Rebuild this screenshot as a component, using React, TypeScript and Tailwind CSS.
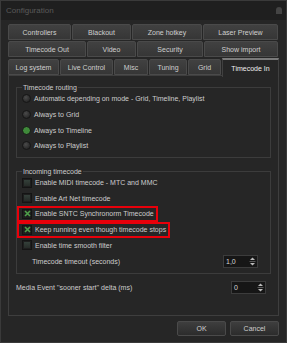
import React from "react";

type Tab = { label: string; w: string; active?: boolean };

const rows: Tab[][] = [
  [
    { label: "Controllers", w: "w-[63px]" },
    { label: "Blackout", w: "w-[59px]" },
    { label: "Zone hotkey", w: "w-[70px]" },
    { label: "Laser Preview", w: "w-[75px]" },
  ],
  [
    { label: "Timecode Out", w: "w-[78px]" },
    { label: "Video", w: "w-[49px]" },
    { label: "Security", w: "w-[66px]" },
    { label: "Show import", w: "w-[74px]" },
  ],
  [
    { label: "Log system", w: "w-[51px]" },
    { label: "Live Control", w: "w-[53px]" },
    { label: "Misc", w: "w-[34px]" },
    { label: "Tuning", w: "w-[38px]" },
    { label: "Grid", w: "w-[33px]" },
    { label: "Timecode In", w: "w-[57px]", active: true },
  ],
];

const routing = [
  { label: "Automatic depending on mode - Grid, Timeline, Playlist" },
  { label: "Always to Grid" },
  { label: "Always to Timeline", checked: true },
  { label: "Always to Playlist" },
];

const incoming = [
  { label: "Enable MIDI timecode - MTC and MMC" },
  { label: "Enable Art Net timecode" },
  { label: "Enable SNTC Synchronorm Timecode", checked: true, mark: true },
  { label: "Keep running even though timecode stops", checked: true, mark: true },
  { label: "Enable time smooth filter" },
];

function Radio({ checked }: { checked?: boolean }) {
  return (
    <span
      className={`mr-[3px] flex h-[9px] w-[9px] shrink-0 items-center justify-center rounded-full border border-[#161616] ${
        checked ? "bg-[#3f8a3a]" : "bg-[radial-gradient(circle_at_40%_35%,#4a4a4a,#1c1c1c)]"
      }`}
    />
  );
}

function Check({ checked }: { checked?: boolean }) {
  return (
    <span className="mr-[3px] flex h-[10px] w-[10px] shrink-0 items-center justify-center border border-[#141414] bg-[#1e1e1e]">
      {checked ? (
        <svg width="7" height="7" viewBox="0 0 7 7">
          <path d="M1 1L6 6M6 1L1 6" stroke="#4fa04a" strokeWidth="1.6" />
        </svg>
      ) : (
        <span className="h-[6px] w-[6px] bg-[linear-gradient(#34403a,#262b28)]" />
      )}
    </span>
  );
}

function Spin({ value, w }: { value: string; w: string }) {
  return (
    <div className={`flex h-[13px] ${w} items-center justify-between border border-[#3c3c3c] bg-[#161616] pl-[2px] pr-[1px]`}>
      <span className="text-[#d6d6d6]">{value}</span>
      <svg width="7" height="9" viewBox="0 0 7 9">
        <path d="M3.5 0.5L6 3H1Z" fill="#bbb" />
        <path d="M0.5 4.5H6.5" stroke="#777" strokeWidth="0.7" />
        <path d="M3.5 8.5L6 6H1Z" fill="#bbb" />
      </svg>
    </div>
  );
}

export default function App() {
  return (
    <div className="h-[343px] w-[287px] overflow-hidden border border-[#3a3a3a] bg-[#262626] text-[7px] leading-none text-[#cdcdcd] [font-family:'Liberation_Sans',Arial,sans-serif]">
      <div className="flex h-[19px] items-center justify-between bg-[#1f1f1f] pl-[5px] pr-[4px]">
        <span className="text-[8px] text-[#5a5a5a]">Configuration</span>
        <span className="h-[7px] w-[6px] rounded-t-full bg-[#444]" />
      </div>

      <div className="px-[7px] pt-[4px]">
        <div className="flex flex-col gap-[1px]">
          {rows.map((row, i) => (
            <div key={i} className="flex items-end gap-[1px]">
              {row.map((t) =>
                t.active ? (
                  <div
                    key={t.label}
                    className={`${t.w} relative z-10 -mb-[2px] flex h-[19px] items-center justify-center border-x border-[#404040] border-t-2 border-t-[#7a7a7a] bg-[#262626] text-[#eeeeee]`}
                  >
                    {t.label}
                  </div>
                ) : (
                  <div
                    key={t.label}
                    className={`${t.w} flex h-[16px] items-center justify-center rounded-t-[2px] border border-[#4a4a4a] bg-[linear-gradient(#414141,#363636)] text-[#cfcfcf]`}
                  >
                    {t.label}
                  </div>
                )
              )}
            </div>
          ))}
        </div>

        <div className="h-[241px] border border-[#3e3e3e] bg-[#262626] px-[7px] pt-[8px]">
          <fieldset className="border border-[#3c3c3c] px-[5px] pb-[3px]">
            <legend className="px-[1px]">Timecode routing</legend>
            {routing.map((r) => (
              <div key={r.label} className="flex h-[15.7px] items-center">
                <Radio checked={r.checked} />
                <span>{r.label}</span>
              </div>
            ))}
          </fieldset>

          <fieldset className="mt-[10px] border border-[#3c3c3c] px-[5px] pb-[3px]">
            <legend className="px-[1px]">Incoming timecode</legend>
            {incoming.map((r) =>
              r.mark ? (
                <div
                  key={r.label}
                  className="-ml-[5px] flex h-[15.7px] w-fit items-center border-2 border-[#e8000a] pl-[3px] pr-[2px]"
                >
                  <Check checked={r.checked} />
                  <span>{r.label}</span>
                </div>
              ) : (
                <div key={r.label} className="flex h-[15.7px] items-center">
                  <Check checked={r.checked} />
                  <span>{r.label}</span>
                </div>
              )
            )}
            <div className="flex h-[17px] items-center justify-between pl-[10px] pr-[7px]">
              <span>Timecode timeout (seconds)</span>
              <Spin value="1,0" w="w-[35px]" />
            </div>
          </fieldset>

          <div className="mt-[7px] flex items-center justify-between pr-[5px]">
            <span>Media Event ''sooner start'' delta (ms)</span>
            <Spin value="0" w="w-[35px]" />
          </div>
        </div>

        <div className="mt-[5px] flex justify-end gap-[4px]">
          <button className="h-[15px] w-[49px] rounded-[2px] border border-[#4a4a4a] bg-[linear-gradient(#3e3e3e,#2c2c2c)] text-[#cfcfcf]">
            OK
          </button>
          <button className="h-[15px] w-[49px] rounded-[2px] border border-[#4a4a4a] bg-[linear-gradient(#3e3e3e,#2c2c2c)] text-[#cfcfcf]">
            Cancel
          </button>
        </div>
      </div>
    </div>
  );
}
